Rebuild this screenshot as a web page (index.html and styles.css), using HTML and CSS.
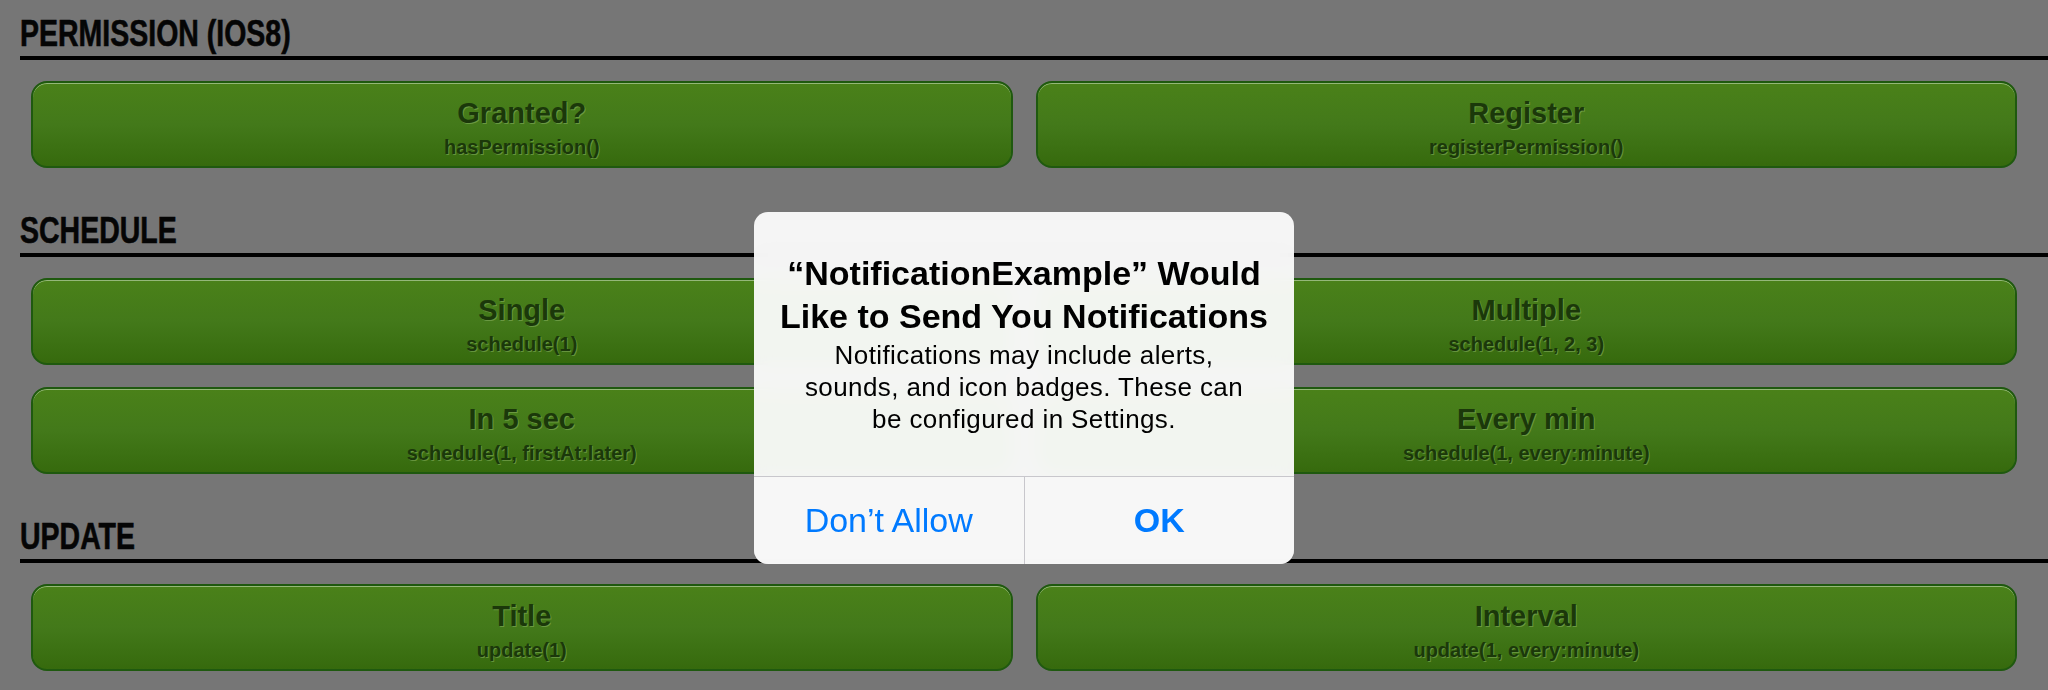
FILE: index.html
```html
<!DOCTYPE html>
<html lang="en">
<head>
<meta charset="utf-8">
<title>Notification Example</title>
<link rel="stylesheet" href="styles.css">
</head>
<body>
<div class="screen">
  <section class="group">
    <h2 class="group-title"><span class="group-label">PERMISSION (IOS8)</span></h2>
    <div class="grid">
      <button class="btn"><span class="btn-title">Granted?</span><span class="btn-sub">hasPermission()</span></button>
      <button class="btn"><span class="btn-title">Register</span><span class="btn-sub">registerPermission()</span></button>
    </div>
  </section>
  <section class="group">
    <h2 class="group-title"><span class="group-label">SCHEDULE</span></h2>
    <div class="grid">
      <button class="btn"><span class="btn-title">Single</span><span class="btn-sub">schedule(1)</span></button>
      <button class="btn"><span class="btn-title">Multiple</span><span class="btn-sub">schedule(1, 2, 3)</span></button>
      <button class="btn"><span class="btn-title">In 5 sec</span><span class="btn-sub">schedule(1, firstAt:later)</span></button>
      <button class="btn"><span class="btn-title">Every min</span><span class="btn-sub">schedule(1, every:minute)</span></button>
    </div>
  </section>
  <section class="group">
    <h2 class="group-title"><span class="group-label">UPDATE</span></h2>
    <div class="grid">
      <button class="btn"><span class="btn-title">Title</span><span class="btn-sub">update(1)</span></button>
      <button class="btn"><span class="btn-title">Interval</span><span class="btn-sub">update(1, every:minute)</span></button>
    </div>
  </section>

  <div class="alert">
    <div class="alert-body">
      <h1 class="alert-title">“NotificationExample” Would<br>Like to Send You Notifications</h1>
      <p class="alert-msg">Notifications may include alerts,<br>sounds, and icon badges. These can<br>be configured in Settings.</p>
    </div>
    <div class="alert-actions">
      <span class="alert-btn">Don’t Allow</span>
      <span class="alert-btn alert-btn-primary">OK</span>
    </div>
  </div>
</div>
</body>
</html>
```

FILE: styles.css
```css
html, body {
  margin: 0;
  padding: 0;
  background: #767676;
}

.screen {
  position: relative;
  width: 2048px;
  height: 690px;
  overflow: hidden;
  padding-top: 17px;
  box-sizing: border-box;
  background: #767676;
  font-family: "Liberation Sans", Arial, sans-serif;
}

.group + .group {
  margin-top: 46px;
}

.group-title {
  margin: 0 0 21px 20px;
  padding-bottom: 5px;
  border-bottom: 4px solid #000;
  font-family: "Liberation Sans", Arial, sans-serif;
  font-weight: 700;
  font-size: 37px;
  line-height: 34px;
  color: #050505;
}

.group-label {
  display: inline-block;
  transform: scaleX(0.77);
  transform-origin: left center;
  -webkit-text-stroke: 0.6px #050505;
}

.grid {
  display: grid;
  grid-template-columns: 1fr 1fr;
  column-gap: 23px;
  row-gap: 22px;
  margin: 0 31px;
}

.btn {
  display: flex;
  flex-direction: column;
  align-items: center;
  box-sizing: border-box;
  height: 87px;
  margin: 0;
  padding: 13px 0 0;
  border: 2px solid #1f590f;
  border-radius: 16px;
  background: linear-gradient(to bottom, #4a8119 0%, #43791a 50%, #366a0d 100%);
  box-shadow: inset 0 1px 0 rgba(200, 220, 185, 0.6);
  font-family: "Liberation Sans", Arial, sans-serif;
  font-weight: 700;
  color: #1b380a;
  text-shadow: 1px 1px 0 rgba(140, 180, 100, 0.55);
  cursor: pointer;
}

.btn-title {
  font-size: 29px;
  line-height: 34px;
}

.btn-sub {
  margin-top: 5px;
  font-size: 20px;
  line-height: 24px;
}

.alert {
  position: absolute;
  left: 754px;
  top: 212px;
  width: 540px;
  border-radius: 14px;
  overflow: hidden;
  background: rgba(252, 252, 252, 0.95);
  -webkit-backdrop-filter: blur(10px);
  backdrop-filter: blur(10px);
  text-align: center;
  color: #000;
}

.alert-body {
  box-sizing: border-box;
  height: 264px;
  padding: 40px 16px 0;
}

.alert-title {
  margin: 0;
  font-family: "Liberation Sans", Arial, sans-serif;
  font-weight: 700;
  font-size: 34px;
  line-height: 43px;
}

.alert-msg {
  margin: 1px 0 0;
  font-family: "Liberation Sans", Arial, sans-serif;
  font-size: 26px;
  line-height: 32px;
  letter-spacing: 0.4px;
}

.alert-actions {
  display: flex;
  height: 87px;
  border-top: 1px solid #c8c7cc;
  background: rgba(248, 248, 248, 0.6);
}

.alert-btn {
  flex: 1;
  display: flex;
  align-items: center;
  justify-content: center;
  font-family: "Liberation Sans", Arial, sans-serif;
  font-size: 34px;
  color: #007aff;
}

.alert-btn + .alert-btn {
  border-left: 1px solid #c8c7cc;
}

.alert-btn-primary {
  font-weight: 700;
}
```
